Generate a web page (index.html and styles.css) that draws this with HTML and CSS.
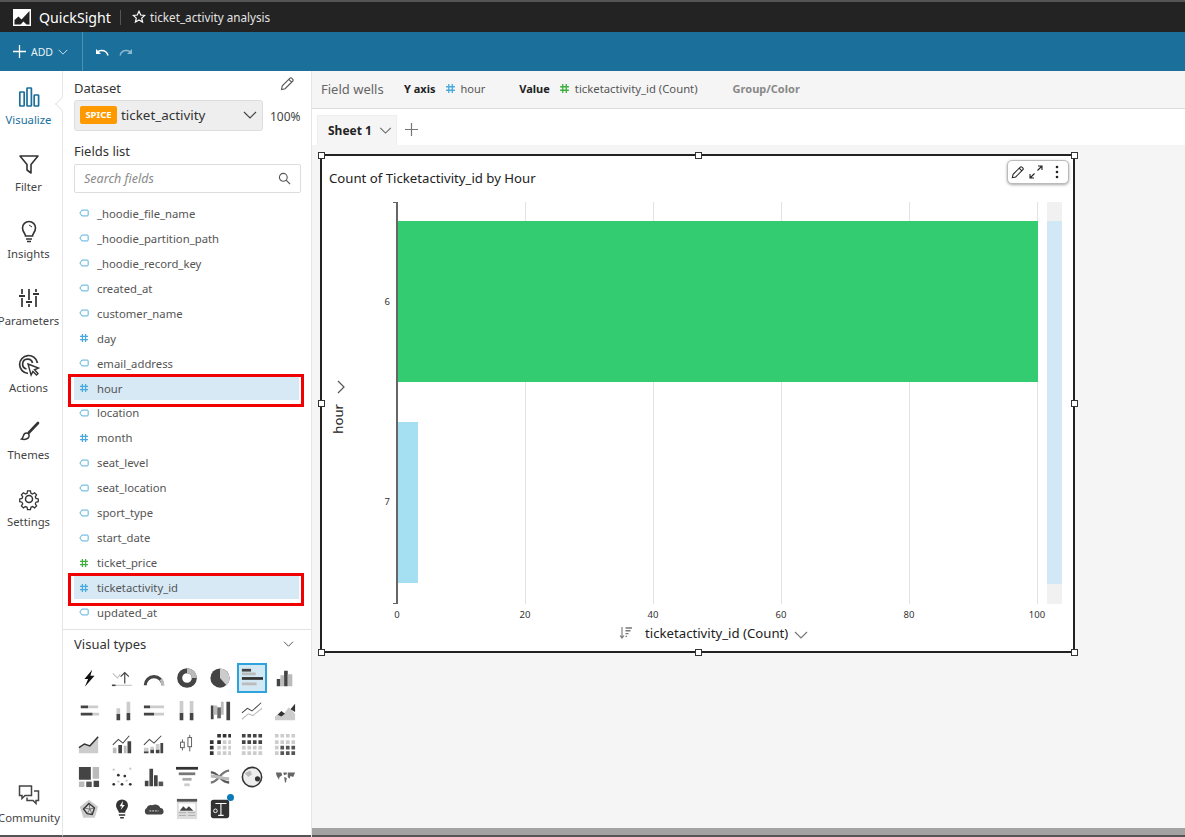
FILE: index.html
```html
<!DOCTYPE html>
<html lang="en">
<head>
<meta charset="utf-8">
<title>QuickSight</title>
<link rel="stylesheet" href="styles.css">
</head>
<body>
<svg class="defs" width="0" height="0" aria-hidden="true">
  <symbol id="str" viewBox="0 0 12 10"><path d="M3.5 1.5H10a1 1 0 0 1 1 1v5a1 1 0 0 1-1 1H3.5L1 5z" fill="none" stroke="#4aa9dc" stroke-width="1.1"/></symbol>
  <symbol id="num" viewBox="0 0 10 10"><path d="M3.4 1v8M6.6 1v8M1 3.4h8M1 6.6h8" fill="none" stroke="#4aa9dc" stroke-width="1.2"/></symbol>
  <symbol id="numg" viewBox="0 0 10 10"><path d="M3.4 1v8M6.6 1v8M1 3.4h8M1 6.6h8" fill="none" stroke="#3fae3f" stroke-width="1.2"/></symbol>
  <symbol id="chev" viewBox="0 0 14 8"><path d="M1 1l6 6 6-6" fill="none" stroke="currentColor" stroke-width="1.2"/></symbol>
  <symbol id="pencil" viewBox="0 0 16 16"><path d="M2.5 13.5l.8-3.6L11 2.2a1.2 1.2 0 0 1 1.7 0l1.1 1.1a1.2 1.2 0 0 1 0 1.7L6.100 12.700zM9.800 3.400l2.800 2.800" fill="none" stroke="currentColor" stroke-width="1.1"/></symbol>
</svg>
<div class="topbar">
  <svg class="logo" viewBox="0 0 18 17"><rect width="18" height="17" fill="#fff"/><path d="M1.500 15.500V11l4-3.500 3 3L16.500 2v13.500h-3l-3-3-3 3z" fill="#232323"/></svg>
  <span class="brand">QuickSight</span>
  <span class="top-div"></span>
  <svg class="star" viewBox="0 0 14 14"><path d="M7 1.300l1.700 3.700 4 .4-3 2.700.9 4L7 10 3.400 12.100l.9-4-3-2.700 4-.4z" fill="none" stroke="#fff" stroke-width="1.200"/></svg>
  <span class="doc">ticket_activity analysis</span>
</div>
<div class="toolbar">
  <div class="add">
    <svg class="plus" viewBox="0 0 13 13"><path d="M6.500 0v13M0 6.500h13" stroke="#fff" stroke-width="1.300"/></svg>
    <span>ADD</span>
    <svg class="add-chev"><use href="#chev"/></svg>
  </div>
  <div class="history">
    <svg class="undo" viewBox="0 0 14 8"><path d="M13 7.500C12 3.500 9 2.500 6.500 2.500 5 2.500 3.800 3 2.800 3.800" fill="none" stroke="#fff" stroke-width="1.500"/><path d="M1 1v5h5z" fill="#fff"/></svg>
    <svg class="undo redo" viewBox="0 0 14 8"><path d="M1 7.500C2 3.500 5 2.500 7.500 2.500 9 2.500 10.200 3 11.200 3.800" fill="none" stroke="#8fb9cf" stroke-width="1.300"/><path d="M13 1v5H8z" fill="#8fb9cf"/></svg>
  </div>
</div>
<div class="workspace">
  <nav class="rail">
    <a class="rail-item active">
      <svg class="rail-icon" viewBox="0 0 24 24"><g fill="none" stroke="#1a6f9b" stroke-width="1.700"><rect x="2.800" y="7" width="4.400" height="14" rx=".5"/><rect x="10" y="3" width="4.400" height="18" rx=".5"/><rect x="17.200" y="10" width="4.400" height="11" rx=".5"/></g></svg>
      <span>Visualize</span>
    </a>
    <a class="rail-item">
      <svg class="rail-icon" viewBox="0 0 24 24"><path d="M3 4h18l-7 8.500V21l-4-3v-5.500z" fill="none" stroke="#333" stroke-width="1.600" stroke-linejoin="round"/></svg>
      <span>Filter</span>
    </a>
    <a class="rail-item">
      <svg class="rail-icon" viewBox="0 0 24 24"><path d="M8.500 17c0-2.500-3-4-3-8a6.500 6.500 0 0 1 13 0c0 4-3 5.500-3 8z" fill="none" stroke="#333" stroke-width="1.600"/><path d="M9 20h6M10 22.500h4" stroke="#333" stroke-width="1.500"/><path d="M12 6l3 2" stroke="#333"/></svg>
      <span>Insights</span>
    </a>
    <a class="rail-item">
      <svg class="rail-icon" viewBox="0 0 24 24"><path d="M5 3v5M5 12v9M12 3v11M12 18v3M19 3v3M19 10v11" stroke="#333" stroke-width="1.700"/><path d="M2 10h6M9 16h6M16 8h6" stroke="#333" stroke-width="1.900"/></svg>
      <span>Parameters</span>
    </a>
    <a class="rail-item">
      <svg class="rail-icon" viewBox="0 0 24 24"><path d="M11 20.500A9 9 0 1 1 20.500 10" fill="none" stroke="#333" stroke-width="1.700"/><path d="M9.500 16a5 5 0 1 1 6-6" fill="none" stroke="#333" stroke-width="1.700"/><path d="M11 11l10.500 4-4 1.800 3.500 3.700-1.500 1.500-3.600-3.600-1.800 3.600z" fill="#fff" stroke="#333" stroke-width="1.400"/></svg>
      <span>Actions</span>
    </a>
    <a class="rail-item">
      <svg class="rail-icon" viewBox="0 0 24 24"><path d="M21 3L12 12.500" stroke="#333" stroke-width="2.600" stroke-linecap="round"/><path d="M9.500 13c2 0 3 1.500 2.500 3.500-.7 2.500-4 3.500-7.500 2.500 1.500-1 1.500-2 2-3.500.4-1.500 1.500-2.500 3-2.500z" fill="none" stroke="#333" stroke-width="1.500"/></svg>
      <span>Themes</span>
    </a>
    <a class="rail-item">
      <svg class="rail-icon" viewBox="0 0 24 24"><circle cx="12" cy="12" r="3.500" fill="none" stroke="#333" stroke-width="1.500"/><path d="M10.300 2.500h3.400l.6 2.800 1.800.8 2.500-1.500 2.300 2.400-1.500 2.400.8 1.900 2.700.6v3.300l-2.700.6-.8 1.900 1.500 2.400-2.300 2.300-2.500-1.500-1.800.8-.6 2.800h-3.400l-.6-2.800-1.800-.8-2.500 1.500-2.300-2.300 1.500-2.400-.8-1.900-2.700-.6v-3.300l2.700-.6.8-1.900-1.500-2.400 2.300-2.400 2.500 1.500 1.800-.8z" fill="none" stroke="#333" stroke-width="1.500" transform="translate(1.800 1.800) scale(.85)"/></svg>
      <span>Settings</span>
    </a>
    <a class="rail-item community">
      <svg class="rail-icon" viewBox="0 0 24 24"><path d="M2.500 3h12v9.500H8l-3 3v-3H2.500z" fill="#fff" stroke="#444" stroke-width="1.500"/><path d="M17 8h4.500v9.500H19v3l-3-3H10v-3" fill="none" stroke="#444" stroke-width="1.500"/></svg>
      <span>Community</span>
    </a>
  </nav>

  <aside class="panel">
    <div class="dataset-head">
      <span class="panel-title">Dataset</span>
      <svg class="edit"><use href="#pencil"/></svg>
    </div>
    <div class="dataset-row">
      <div class="select">
        <span class="spice">SPICE</span>
        <span class="select-name">ticket_activity</span>
        <svg class="select-chev"><use href="#chev"/></svg>
      </div>
      <span class="pct">100%</span>
    </div>
    <div class="panel-title fields-title">Fields list</div>
    <div class="search">
      <span>Search fields</span>
      <svg class="search-icon" viewBox="0 0 14 14"><circle cx="5.700" cy="5.700" r="4.200" fill="none" stroke="#555" stroke-width="1.200"/><path d="M8.800 8.800l4.200 4.200" stroke="#555" stroke-width="1.300"/></svg>
    </div>
    <ul class="fields">
      <li><svg class="ft"><use href="#str"/></svg>_hoodie_file_name</li>
      <li><svg class="ft"><use href="#str"/></svg>_hoodie_partition_path</li>
      <li><svg class="ft"><use href="#str"/></svg>_hoodie_record_key</li>
      <li><svg class="ft"><use href="#str"/></svg>created_at</li>
      <li><svg class="ft"><use href="#str"/></svg>customer_name</li>
      <li><svg class="ft"><use href="#num"/></svg>day</li>
      <li><svg class="ft"><use href="#str"/></svg>email_address</li>
      <li class="picked"><svg class="ft"><use href="#num"/></svg>hour</li>
      <li><svg class="ft"><use href="#str"/></svg>location</li>
      <li><svg class="ft"><use href="#num"/></svg>month</li>
      <li><svg class="ft"><use href="#str"/></svg>seat_level</li>
      <li><svg class="ft"><use href="#str"/></svg>seat_location</li>
      <li><svg class="ft"><use href="#str"/></svg>sport_type</li>
      <li><svg class="ft"><use href="#str"/></svg>start_date</li>
      <li><svg class="ft"><use href="#numg"/></svg>ticket_price</li>
      <li class="picked"><svg class="ft"><use href="#num"/></svg>ticketactivity_id</li>
      <li><svg class="ft"><use href="#str"/></svg>updated_at</li>
    </ul>
    <section class="visuals">
      <div class="visuals-head">
        <span class="panel-title">Visual types</span>
        <svg class="visuals-chev"><use href="#chev"/></svg>
      </div>
      <div class="vgrid">
        <span class="vt"><svg viewBox="0 0 24 24"><path d="M15.500 3L7 13h4l-3.500 8.500L18 9.500h-4.500z" fill="#111"/></svg></span>
        <span class="vt"><svg viewBox="0 0 24 24"><path d="M15 18V6M10.500 10.500L15 6l4.500 4.500" fill="none" stroke="#444" stroke-width="1.300"/><path d="M2 7l5 5 3-4" fill="none" stroke="#bbb" stroke-width="1.100"/><path d="M1 20h22" stroke="#ccc" stroke-width="1.300"/><path d="M1 20h4" stroke="#444" stroke-width="1.700"/></svg></span>
        <span class="vt"><svg viewBox="0 0 24 24"><path d="M2.500 20a9.500 9.500 0 0 1 19 0" fill="none" stroke="#444" stroke-width="3.400"/><path d="M19.500 13.500a9.500 9.500 0 0 1 2 6.500" fill="none" stroke="#bbb" stroke-width="3.400"/></svg></span>
        <span class="vt"><svg viewBox="0 0 24 24"><circle cx="12" cy="12" r="8" fill="none" stroke="#444" stroke-width="5.500"/><path d="M12 4a8 8 0 0 1 8 8" fill="none" stroke="#bbb" stroke-width="5.500"/></svg></span>
        <span class="vt"><svg viewBox="0 0 24 24"><circle cx="12" cy="12" r="10.500" fill="#444"/><path d="M12 12V1.500A10.500 10.500 0 0 1 22.500 12 10.500 10.500 0 0 1 19 20z" fill="#ccc"/></svg></span>
        <span class="vt sel"><svg viewBox="0 0 24 24"><path d="M1 2h10v3H1z" fill="#444"/><path d="M1 6h15v3H1zM1 17h16v3H1z" fill="#bbb"/><path d="M1 11h23v3H1z" fill="#333"/></svg></span>
        <span class="vt"><svg viewBox="0 0 24 24"><path d="M3 13h4v8H3zM11 4h4v17h-4z" fill="#444"/><path d="M7 9h4v12H7zM15 8h5v13h-5z" fill="#bbb"/></svg></span>

        <span class="vt"><svg viewBox="0 0 24 24"><path d="M3 6h8v3H3zM3 14h13v3H3z" fill="#444"/><path d="M11 6h11v3H11zM16 14h7v3h-7z" fill="#ccc"/></svg></span>
        <span class="vt"><svg viewBox="0 0 24 24"><path d="M6 15h4v7H6zM17 14h4v8h-4z" fill="#444"/><path d="M6 9h4v6H6zM17 2h4v12h-4z" fill="#ccc"/></svg></span>
        <span class="vt"><svg viewBox="0 0 24 24"><path d="M1 6h7v3H1zM1 14h11v3H1z" fill="#444"/><path d="M8 6h15v3H8zM12 14h11v3H12z" fill="#ccc"/></svg></span>
        <span class="vt"><svg viewBox="0 0 24 24"><path d="M4 14h4v8H4zM15 14h4v8h-4z" fill="#444"/><path d="M4 1h4v13H4zM15 1h4v13h-4z" fill="#ccc"/></svg></span>
        <span class="vt"><svg viewBox="0 0 24 24"><path d="M2 6h3v15H2zM19 2h4v20h-4z" fill="#444"/><path d="M5 6h4v10H5zM13 2h3v14h-3z" fill="#bbb"/><path d="M9 8h4v12H9z" fill="#666"/></svg></span>
        <span class="vt"><svg viewBox="0 0 24 24"><path d="M1 14l6-5 5 3L22 3" fill="none" stroke="#444" stroke-width="1.100"/><path d="M1 21l7-6 5 2 10-8" fill="none" stroke="#bbb" stroke-width="1.100"/></svg></span>
        <span class="vt"><svg viewBox="0 0 24 24"><path d="M1 22v-4l5-4 4 2 6-8 7 7v7z" fill="#ccc"/><path d="M4 16l4-4 4 3-4 3zM18 10l5-6v9z" fill="#333"/></svg></span>

        <span class="vt"><svg viewBox="0 0 24 24"><path d="M1 22v-6l6-4 6 2 9-10v18z" fill="#ccc"/><path d="M1 16l6-4 6 2 9-10" fill="none" stroke="#333" stroke-width="1.600"/></svg></span>
        <span class="vt"><svg viewBox="0 0 24 24"><path d="M2 16h4v6H2zM14 14h3v8h-3z" fill="#bbb"/><path d="M8 13h4v9H8zM18 9h4v13h-4z" fill="#444"/><path d="M2 13l6-6 5 4 7-8" fill="none" stroke="#444" stroke-width="1.100"/></svg></span>
        <span class="vt"><svg viewBox="0 0 24 24"><path d="M1 20h5v2H1zM8 18h4v4H8zM14 18h4v4h-4zM19 11h3v11h-3z" fill="#444"/><path d="M8 15h4v3H8zM14 12h4v6h-4zM1 16h5v4H1z" fill="#ccc"/><path d="M1 13l6-6 5 4 8-8" fill="none" stroke="#444" stroke-width="1.100"/></svg></span>
        <span class="vt"><svg viewBox="0 0 24 24"><g fill="none" stroke="#555"><rect x="5" y="10" width="4" height="6"/><rect x="13" y="5" width="4" height="10"/><path d="M7 7v3M7 16v3M15 2v3M15 15v5"/></g></svg></span>
        <span class="vt"><svg viewBox="0 0 24 24"><path d="M9 1h4v4H9zM15 1h4v4h-4zM21 1h3v4h-3zM1 8h4v4H1zM1 14h4v4H1zM1 20h4v4H1zM9 8h4v4H9z" fill="#333"/><path d="M15 8h4v4h-4zM21 8h3v4h-3zM9 14h4v4H9zM15 14h4v4h-4zM21 14h3v4h-3zM9 20h4v4H9zM15 20h4v4h-4zM21 20h3v4h-3z" fill="#ccc"/></svg></span>
        <span class="vt"><svg viewBox="0 0 24 24"><path d="M1 1h4v4H1zM7 1h4v4H7zM13 1h4v4h-4zM19 1h4v4h-4zM1 8h4v4H1zM7 8h4v4H7zM13 8h4v4h-4zM19 8h4v4h-4z" fill="#444"/><path d="M1 14h4v4H1zM7 14h4v4H7zM13 14h4v4h-4zM19 14h4v4h-4zM1 20h4v4H1zM7 20h4v4H7zM13 20h4v4h-4zM19 20h4v4h-4z" fill="#ccc"/></svg></span>
        <span class="vt"><svg viewBox="0 0 24 24"><path d="M1 1h4v4H1zM7 1h4v4H7zM13 1h4v4h-4zM19 1h4v4h-4zM1 8h4v4H1zM7 8h4v4H7zM13 8h4v4h-4zM19 8h4v4h-4zM1 14h4v4H1zM1 20h4v4H1z" fill="#ccc"/><path d="M7 14h4v4H7zM13 14h4v4h-4zM19 14h4v4h-4zM7 20h4v4H7zM13 20h4v4h-4zM19 20h4v4h-4z" fill="#555"/></svg></span>

        <span class="vt"><svg viewBox="0 0 24 24"><path d="M1 1h13v14H1zM17 16h6v7h-6z" fill="#444"/><path d="M16 1h7v13h-7zM1 17h6v6H1z" fill="#bbb"/><path d="M9 17h6v6H9z" fill="#555"/></svg></span>
        <span class="vt"><svg viewBox="0 0 24 24"><g fill="#333"><circle cx="8" cy="10" r="1.500"/><circle cx="15" cy="11" r="1.500"/><circle cx="3" cy="20" r="1.500"/><circle cx="12" cy="20" r="1.500"/><circle cx="21" cy="20" r="1.500"/></g><g fill="#ccc"><circle cx="3" cy="4" r="1.300"/><circle cx="21" cy="3" r="1.300"/><circle cx="8" cy="17" r="1.300"/><circle cx="17" cy="16" r="1.300"/></g></svg></span>
        <span class="vt"><svg viewBox="0 0 24 24"><path d="M2 16h4v6H2zM7 3h4v19H7zM12 10h4v12h-4z" fill="#444"/><path d="M17 17h5v5h-5z" fill="#555"/></svg></span>
        <span class="vt"><svg viewBox="0 0 24 24"><path d="M0 1h24v3H0z" fill="#333"/><path d="M3 7h18v3H3z" fill="#777"/><path d="M7 13h10v3H7z" fill="#aaa"/><path d="M9 19h6v3H9z" fill="#ccc"/></svg></span>
        <span class="vt"><svg viewBox="0 0 24 24"><g fill="none"><path d="M2 7c9 0 10 11 20 11" stroke="#555" stroke-width="2.500"/><path d="M2 18C11 18 12 5 22 5" stroke="#777" stroke-width="2.500"/><path d="M2 11c9 0 11 3 20 3" stroke="#bbb" stroke-width="3.500"/></g></svg></span>
        <span class="vt"><svg viewBox="0 0 24 24"><circle cx="12" cy="12" r="10.500" fill="#eee" stroke="#333" stroke-width="1.700"/><path d="M4 8l6-3 2 4-4 3z" fill="#bbb"/><circle cx="18" cy="14" r="2.800" fill="#333"/></svg></span>
        <span class="vt"><svg viewBox="0 0 24 24"><path d="M2 7h6l1 3-3 2-.5 3L3 11zM10 7h4v2l-3 1zM11 12l3 1-1 5h-1zM15 7h8l-2 5-3-1-1 3-2-2z" fill="#666"/></svg></span>

        <span class="vt"><svg viewBox="0 0 24 24"><path d="M12 2l10 7.500-3.800 12H5.800L2 9.500z" fill="#ccc"/><path d="M12 6l6 5-2.500 7-5.500-1-4-5z" fill="#ddd" stroke="#333" stroke-width="1.500"/><path d="M12 6l1 6 5-1M13 12l2.500 6M13 12l-3 5M13 12l-7-1" stroke="#555" stroke-width=".8" fill="none"/></svg></span>
        <span class="vt"><svg viewBox="0 0 24 24"><path d="M8.500 16c0-2.500-3-4-3-8a6.500 6.500 0 0 1 13 0c0 4-3 5.500-3 8z" fill="#333"/><path d="M13 3L9.500 9H12l-1.500 4L15 7.500h-2.500z" fill="#fff"/><path d="M8.500 18.500h7M10 21.500h4" stroke="#333" stroke-width="1.800"/></svg></span>
        <span class="vt"><svg viewBox="0 0 24 24"><path d="M4 18a4 4 0 0 1 0-7 4.500 4.500 0 0 1 6-3 6 6 0 0 1 9 3 3.600 3.600 0 0 1 1 7z" fill="#444"/><path d="M7 14h10" stroke="#bbb" stroke-width="1.400" stroke-dasharray="2 1"/></svg></span>
        <span class="vt"><svg viewBox="0 0 24 24"><rect x="1" y="1" width="22" height="22" fill="#ddd"/><path d="M1 1h22v3H1z" fill="#555"/><rect x="3" y="6" width="18" height="8" fill="#fff"/><path d="M4 14l4-5 3 3 3-3 5 5z" fill="#444"/><path d="M3 16h8M13 16h8M3 19h8M13 19h8" stroke="#aaa"/></svg></span>
        <span class="vt vt-new"><svg viewBox="0 0 24 24"><rect x="2" y="2" width="20" height="20" rx="3" fill="#333"/><path d="M7 6h12M13 6v13M10 19h6" stroke="#fff" stroke-width="1.200" fill="none"/><circle cx="7" cy="14" r="2" fill="none" stroke="#fff"/></svg></span>
      </div>
    </section>
  </aside>

  <main class="main">
    <div class="wells">
      <span class="wells-title">Field wells</span>
      <span class="well"><b>Y axis</b><svg class="well-ic"><use href="#num"/></svg><span>hour</span></span>
      <span class="well well-value"><b>Value</b><svg class="well-ic"><use href="#numg"/></svg><span>ticketactivity_id (Count)</span></span>
      <b class="well-empty">Group/Color</b>
    </div>
    <div class="tabs">
      <div class="tab"><b>Sheet 1</b><svg class="tab-chev"><use href="#chev"/></svg></div>
      <svg class="tab-plus" viewBox="0 0 12 12"><path d="M6 0v12M0 6h12" stroke="#777" stroke-width="1.100"/></svg>
    </div>
    <div class="canvas">
      <article class="frame">
        <i class="h h-tl"></i><i class="h h-tc"></i><i class="h h-tr"></i>
        <i class="h h-ml"></i><i class="h h-mr"></i>
        <i class="h h-bl"></i><i class="h h-bc"></i><i class="h h-br"></i>
        <div class="hover-tools">
          <svg class="ht-pen"><use href="#pencil"/></svg>
          <svg class="ht-exp" viewBox="0 0 14 14"><path d="M8.500 5.500L13 1M9 1h4v4M5.500 8.500L1 13M1 9v4h4" fill="none" stroke="#222" stroke-width="1.100"/></svg>
          <svg class="ht-dots" viewBox="0 0 4 14"><circle cx="2" cy="2" r="1.300" fill="#222"/><circle cx="2" cy="7" r="1.300" fill="#222"/><circle cx="2" cy="12" r="1.300" fill="#222"/></svg>
        </div>
        <h2 class="chart-title">Count of Ticketactivity_id by Hour</h2>
        <div class="chart">
          <div class="y-side">
            <div class="y-title">
              <svg class="y-chev"><use href="#chev"/></svg>
              <span>hour</span>
            </div>
            <div class="y-labels"><span>6</span><span>7</span></div>
          </div>
          <div class="plot">
            <div class="bar bar-a"></div>
            <div class="bar bar-b"></div>
          </div>
          <div class="minimap"><div class="mini-fill"></div></div>
          <div class="x-labels"><span>0</span><span>20</span><span>40</span><span>60</span><span>80</span><span>100</span></div>
          <div class="x-title">
            <svg class="sort" viewBox="0 0 14 14"><path d="M3 1v11M1 9.500L3 12l2-2.500" fill="none" stroke="#777" stroke-width="1.100"/><path d="M6.500 2h6.500M6.500 4.800h5M6.500 7.600h3M6.500 10.400h1.500" stroke="#777" stroke-width="1.400"/></svg>
            <span>ticketactivity_id (Count)</span>
            <svg class="x-chev"><use href="#chev"/></svg>
          </div>
        </div>
      </article>
    </div>
    <div class="hscroll"></div>
  </main>
</div>
</body>
</html>
```
FILE: styles.css
```css
* { box-sizing: border-box; }
html, body { margin: 0; height: 100%; overflow: hidden; }
body {
  width: 1185px; height: 837px; display: flex; flex-direction: column;
  font-family: "Noto Sans", "Open Sans", sans-serif; color: #333; background: #fff;
}
.defs { position: absolute; }
svg { display: block; flex: none; }

.topbar {
  height: 32px; flex: none; display: flex; align-items: center; padding-left: 13px;
  background: #232323; border-top: 2px solid #555; color: #fff;
}
.logo { width: 18px; height: 17px; }
.brand { margin-left: 8px; font-size: 14.200px; width: 73px; }
.top-div { width: 1px; height: 15px; background: #555; margin: 0 10px 0 8px; }
.star { width: 14px; height: 14px; margin-left: 1px; }
.doc { margin-left: 4px; font-size: 11.700px; color: #e4e4e4; }

.toolbar {
  height: 39px; flex: none; display: flex; align-items: stretch; background: #1a6f9b; color: #e8f1f6;
}
.add {
  width: 83px; display: flex; align-items: center; padding-left: 13px;
  border-right: 1px solid #4c90b3; font-size: 10.500px;
}
.plus { width: 13px; height: 13px; }
.add span { margin-left: 5px; }
.add-chev { width: 10px; height: 6px; margin-left: 5px; color: #e8f1f6; }
.history { display: flex; align-items: center; padding-left: 12px; gap: 10px; }
.undo { width: 14px; height: 8px; }

.workspace { flex: 1; min-height: 0; display: flex; position: relative; }

.rail {
  width: 63px; flex: none; display: flex; flex-direction: column; padding-top: 14px;
  border-right: 1px solid #e6e6e6; background: #fff; border-bottom: 2px solid #555;
}
.rail-item {
  height: 67px; flex: none; display: flex; flex-direction: column; align-items: center;
  font-size: 11.300px; color: #444; white-space: nowrap; position: relative; padding-right: 5px;
}
.rail-icon { width: 24px; height: 24px; margin-bottom: 3px; }
.rail-item span { line-height: 16px; }
.rail-item.active { color: #1a6f9b; }
.rail-item.active::after {
  content: ""; position: absolute; right: -5px; top: 14px; width: 9px; height: 9px; background: #fff;
  border-left: 1px solid #e6e6e6; border-bottom: 1px solid #e6e6e6; transform: rotate(45deg);
}
.community { margin-top: auto; height: 52px; padding-right: 4px; }

.panel {
  width: 249px; flex: none; display: flex; flex-direction: column; background: #fff;
  border-bottom: 2px solid #555;
}
.dataset-head {
  height: 28px; flex: none; display: flex; justify-content: space-between; align-items: flex-end;
  padding: 0 17px 2px 11px;
}
.panel-title { font-size: 13px; line-height: 18px; color: #333; }
.edit { width: 16px; height: 16px; margin-bottom: 5px; color: #555; }
.dataset-row { display: flex; align-items: center; padding-left: 11px; height: 32px; flex: none; }
.select {
  width: 189px; height: 31px; display: flex; align-items: center; padding: 0 5px 0 5px;
  background: #eee; border: 1px solid #ddd; border-radius: 3px;
}
.spice {
  width: 37px; height: 18px; border-radius: 2px; background: #ff9900; color: #fff; font-size: 9.500px;
  font-weight: 700; text-align: center; line-height: 18px;
}
.select-name { margin-left: 4px; font-size: 13.400px; color: #333; flex: 1; }
.select-chev { width: 14px; height: 8px; color: #444; }
.pct { margin-left: 7px; font-size: 12px; color: #444; position: relative; top: 1px; }
.fields-title { height: 18px; flex: none; margin: 11px 0 0 11px; }
.search {
  flex: none; height: 29px; width: 227px; margin: 4px 0 8px 11px; display: flex; align-items: center;
  justify-content: space-between; padding: 0 9px; border: 1px solid #ddd; border-radius: 2px;
  font-size: 12.500px; font-style: italic; color: #8a8a8a;
}
.search-icon { width: 13px; height: 13px; }
.fields { list-style: none; margin: 0; padding: 0; flex: 1; min-height: 0; overflow: hidden; }
.fields li {
  height: 24.950px; display: flex; align-items: center; position: relative;
  margin-left: 11px; width: 225px; padding-left: 5px; font-size: 11.300px; color: #555;
}
.ft { width: 10px; height: 10px; margin-right: 8px; }
.fields .picked { z-index: 0; }
.fields .picked::before {
  content: ""; position: absolute; z-index: -1; inset: 1px 0 1px 0; background: #d6e9f5;
}
.fields .picked::after {
  content: ""; position: absolute; left: -6px; right: -5px; top: -2px; bottom: -6px;
  border: 3px solid #f00000;
}
.visuals {
  height: 206px; flex: none; border-top: 1px solid #e3e3e3; padding: 4px 0 0 11px;
}
.visuals-head { display: flex; justify-content: space-between; align-items: center; height: 20px; padding-right: 18px; }
.visuals-chev { width: 11px; height: 6px; color: #444; }
.vgrid {
  display: grid; grid-template-columns: repeat(7, 32.600px); grid-auto-rows: 32.750px;
  margin: 8px 0 0 -1px; align-items: center; justify-items: center;
}
.vt { width: 24px; height: 24px; display: block; position: relative; }
.vt svg { width: 22px; height: 22px; margin: 1px; }
.vt.sel { outline: 2px solid #2ea3dc; outline-offset: -1px; background: #d3e8f5; width: 28px; height: 28px; }
.vt.sel svg { margin: 3px; }
.vt-new::after {
  content: ""; position: absolute; right: -2px; top: -3px; width: 7px; height: 7px;
  background: #0d7ab5; border-radius: 50%;
}

.main { flex: 1; min-width: 0; display: flex; flex-direction: column; background: #f5f5f5; border-left: 1px solid #e6e6e6; margin-left: -1px; }
.wells {
  height: 38px; flex: none; display: flex; align-items: center; padding: 0 0 2px 9px;
  background: #f5f5f5; border-bottom: 1px solid #dcdcdc; font-size: 11px;
}
.wells-title { font-size: 13px; color: #666; width: 83px; }
.well { display: flex; align-items: center; color: #555; }
.well b, .tab b { font-weight: 700; color: #222; }
.well b { font-size: 11px; }
.well-ic { width: 11px; height: 11px; margin: 0 5px 0 9px; }
.well-value { margin-left: 34px; font-size: 11.300px; }
.well-empty { margin-left: 35px; color: #888; font-size: 11px; }
.tabs { height: 36px; flex: none; display: flex; align-items: flex-end; padding-left: 5px; background: #fff; }
.tab {
  width: 80px; height: 30px; display: flex; align-items: center; padding-left: 10px;
  background: #f5f5f5; border: 1px solid #eee; border-bottom: 0; font-size: 12px;
}
.tab-chev { width: 13px; height: 7px; margin-left: 7px; color: #666; }
.tab-plus { width: 13px; height: 13px; margin: 0 0 9px 8px; }

.canvas { flex: 1; min-height: 0; padding: 9px 0 0 8px; }
.frame {
  width: 755px; height: 499px; background: #fff; border: 2px solid #222; position: relative;
  padding: 12px 0 0 0;
}
.h { position: absolute; width: 7px; height: 7px; background: #fff; border: 1px solid #333; }
.h-tl { left: -4.500px; top: -4.500px; } .h-tc { left: 372.500px; top: -4.500px; } .h-tr { right: -4.500px; top: -4.500px; }
.h-ml { left: -4.500px; top: 244px; } .h-mr { right: -4.500px; top: 244px; }
.h-bl { left: -4.500px; bottom: -4.500px; } .h-bc { left: 372.500px; bottom: -4.500px; } .h-br { right: -4.500px; bottom: -4.500px; }
.hover-tools {
  position: absolute; right: 4px; top: 4px; width: 62px; height: 24px; display: flex; align-items: center;
  padding-left: 2px; background: #fff; border: 1px solid #bbb; border-radius: 5px; box-shadow: 0 1px 3px rgba(0,0,0,.35);
}
.ht-pen { width: 15px; height: 15px; color: #222; }
.ht-exp { width: 14px; height: 14px; margin-left: 4px; }
.ht-dots { width: 4px; height: 14px; margin-left: 12px; }
.chart-title { margin: 0 0 0 7px; height: 21px; font-size: 13.200px; line-height: 21px; font-weight: 400; color: #222; }
.chart {
  display: grid; grid-template-columns: 75px 641px 9px 15px; grid-template-rows: 402px 22px 14px;
  margin-top: 13px;
}
.y-side { display: flex; justify-content: flex-start; position: relative; }
.y-title {
  width: 32px; display: flex; flex-direction: column; align-items: center;
  padding-top: 181px; font-size: 13.200px;
}
.y-chev { width: 14px; height: 8px; transform: translateX(3px) rotate(-90deg); color: #555; margin-bottom: 13px; }
.y-title span { writing-mode: vertical-rl; transform: rotate(180deg); line-height: 14px; color: #222; }
.y-labels {
  flex: 1; display: flex; flex-direction: column; justify-content: space-around; align-items: flex-end;
  padding: 0 7px 2px 0; font-size: 9.500px; color: #333;
}
.y-labels span { line-height: 12px; }
.plot {
  display: flex; flex-direction: column; gap: 40px; padding-top: 19px;
  border-left: 2px solid #666; margin-left: -1px; width: 643px;
  background: repeating-linear-gradient(90deg, transparent 0 127px, #e3e3e3 127px 128px);
  position: relative;
}
.plot::before, .plot::after {
  content: ""; position: absolute; left: -5px; width: 5px; height: 1px; background: #666;
}
.plot::before { top: 0; }
.plot::after { bottom: 0; }
.bar { height: 161px; flex: none; }
.bar-a { width: 640px; background: #33cc70; }
.bar-b { width: 20px; background: #a4dff2; }
.minimap { background: #f1f1f1; padding-top: 19px; height: 402px; grid-column: 4; grid-row: 1; }
.mini-fill { height: 363px; background: #d2e8f6; }
.x-labels {
  grid-column: 2 / 5; grid-row: 2; width: 660px; margin-left: -10px; padding-top: 5px;
  font-size: 9.500px; color: #333;
  display: grid; grid-template-columns: repeat(6, 128px); line-height: 12px;
}
.x-labels span { width: 20px; text-align: center; }
.x-title {
  grid-column: 1 / 5; grid-row: 3; display: flex; align-items: center; font-size: 13.200px; color: #222;
  padding-left: 297px; white-space: nowrap;
}
.sort { width: 14px; height: 14px; margin-right: 12px; }
.x-chev { width: 14px; height: 8px; margin-left: 6px; margin-top: 3px; color: #777; }
.hscroll { height: 9px; flex: none; background: #a2a2a2; border-bottom: 2px solid #555; }
```
